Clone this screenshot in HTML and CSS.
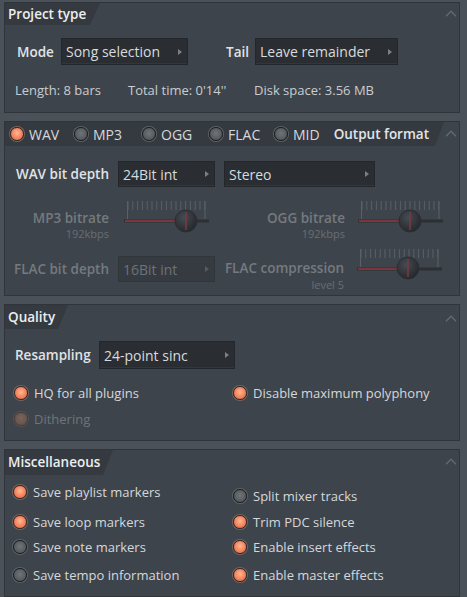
FILE: index.html
```html
<!DOCTYPE html>
<html>
<head>
<meta charset="utf-8">
<title>Render</title>
<link rel="stylesheet" href="styles.css">
</head>
<body>
<div class="win">

<section class="panel p1">
  <header class="phead">
    <div class="tab t-project">Project type</div>
    <svg class="chev c1" width="12" height="7" viewBox="0 0 12 7"><path d="M1 6.2 L6 1.2 L11 6.2"/></svg>
  </header>
  <div class="mode-row">
    <span class="lbl lbl-mode">Mode</span>
    <div class="dd dd-mode"><span>Song selection</span><i class="arr"></i></div>
    <span class="lbl lbl-tail">Tail</span>
    <div class="dd dd-tail"><span>Leave remainder</span><i class="arr"></i></div>
  </div>
  <div class="info-row">
    <span class="info i1">Length: 8 bars</span>
    <span class="info i2">Total time: 0'14''</span>
    <span class="info">Disk space: 3.56 MB</span>
  </div>
</section>

<section class="panel p2">
  <header class="phead">
    <div class="band">
      <label class="ritem f1"><i class="radio on"></i>WAV</label>
      <label class="ritem f2"><i class="radio"></i>MP3</label>
      <label class="ritem f3"><i class="radio"></i>OGG</label>
      <label class="ritem f4"><i class="radio"></i>FLAC</label>
      <label class="ritem"><i class="radio"></i>MID</label>
      <span class="band-title">Output format</span>
    </div>
    <svg class="chev c2" width="12" height="7" viewBox="0 0 12 7"><path d="M1 6.2 L6 1.2 L11 6.2"/></svg>
  </header>
  <div class="wav-row">
    <span class="lbl col-lbl">WAV bit depth</span>
    <div class="dd dd-depth"><span>24Bit int</span><i class="arr"></i></div>
    <div class="dd dd-stereo"><span>Stereo</span><i class="arr"></i></div>
  </div>
  <div class="srow1">
    <div class="slbl s-left">
      <span class="dim-lbl">MP3 bitrate</span>
      <span class="sub">192kbps</span>
    </div>
    <svg class="slider sl-mp3" width="88" height="40" viewBox="0 0 88 40">
      <defs>
        <radialGradient id="kg" cx="40%" cy="35%" r="70%">
          <stop offset="0" stop-color="#464b52"/>
          <stop offset="1" stop-color="#23262a"/>
        </radialGradient>
      </defs>
      <path class="ticks" d="M6 1V10M10.8 1V10M15.6 1V10M20.4 1V10M25.2 1V10M30 1V10M34.8 1V10M39.6 1V10M44.4 1V10M49.2 1V10M54 1V10M58.8 1V10M63.6 1V10M68.4 1V10M73.2 1V10M78 1V10M82.8 1V10"/>
      <path class="ends" d="M5.5 1V19M83 1V19"/>
      <line class="track" x1="2" y1="21" x2="87" y2="21"/>
      <line class="fill" x1="3" y1="21" x2="56" y2="21"/>
      <circle class="knob" cx="64" cy="21" r="11" fill="url(#kg)"/>
      <line class="kline" x1="64" y1="12" x2="64" y2="30"/>
    </svg>
    <div class="slbl s-right">
      <span class="dim-lbl">OGG bitrate</span>
      <span class="sub">192kbps</span>
    </div>
    <svg class="slider sl-ogg" width="88" height="40" viewBox="0 0 88 40">
      <path class="ticks" d="M6 1V10M10.8 1V10M15.6 1V10M20.4 1V10M25.2 1V10M30 1V10M34.8 1V10M39.6 1V10M44.4 1V10M49.2 1V10M54 1V10M58.8 1V10M63.6 1V10M68.4 1V10M73.2 1V10M78 1V10M82.8 1V10"/>
      <path class="ends" d="M5.5 1V19M83 1V19"/>
      <line class="track" x1="2" y1="21" x2="87" y2="21"/>
      <line class="fill" x1="3" y1="21" x2="46" y2="21"/>
      <circle class="knob" cx="54" cy="21" r="11" fill="url(#kg)"/>
      <line class="kline" x1="54" y1="12" x2="54" y2="30"/>
    </svg>
  </div>
  <div class="srow2">
    <span class="dim-lbl col-lbl flac-lbl">FLAC bit depth</span>
    <div class="dd dd-depth dd-off"><span>16Bit int</span><i class="arr"></i></div>
    <div class="slbl s-comp">
      <span class="dim-lbl">FLAC compression</span>
      <span class="sub">level 5</span>
    </div>
    <svg class="slider sl-flac" width="88" height="40" viewBox="0 0 88 40">
      <path class="ticks" d="M6 1V10M10.8 1V10M15.6 1V10M20.4 1V10M25.2 1V10M30 1V10M34.8 1V10M39.6 1V10M44.4 1V10M49.2 1V10M54 1V10M58.8 1V10M63.6 1V10M68.4 1V10M73.2 1V10M78 1V10M82.8 1V10"/>
      <path class="ends" d="M5.5 1V19M83 1V19"/>
      <line class="track" x1="2" y1="21" x2="87" y2="21"/>
      <line class="fill" x1="3" y1="21" x2="45" y2="21"/>
      <circle class="knob" cx="53" cy="20" r="11" fill="url(#kg)"/>
      <line class="kline" x1="53" y1="11" x2="53" y2="29"/>
    </svg>
  </div>
</section>

<section class="panel p3">
  <header class="phead">
    <div class="tab t-quality">Quality</div>
    <svg class="chev c3" width="12" height="7" viewBox="0 0 12 7"><path d="M1 6.2 L6 1.2 L11 6.2"/></svg>
  </header>
  <div class="res-row">
    <span class="lbl lbl-res">Resampling</span>
    <div class="dd dd-res"><span>24-point sinc</span><i class="arr"></i></div>
  </div>
  <div class="q-row q1">
    <label class="ritem qcol"><i class="radio on"></i>HQ for all plugins</label>
    <label class="ritem"><i class="radio on"></i>Disable maximum polyphony</label>
  </div>
  <div class="q-row q2">
    <label class="ritem off-item"><i class="radio dis"></i>Dithering</label>
  </div>
</section>

<section class="panel p4">
  <header class="phead">
    <div class="tab t-misc">Miscellaneous</div>
    <svg class="chev c4" width="12" height="7" viewBox="0 0 12 7"><path d="M1 6.2 L6 1.2 L11 6.2"/></svg>
  </header>
  <div class="misc-grid">
    <label class="ritem"><i class="radio on"></i>Save playlist markers</label>
    <label class="ritem lower"><i class="radio"></i>Split mixer tracks</label>
    <label class="ritem"><i class="radio on"></i>Save loop markers</label>
    <label class="ritem"><i class="radio on"></i>Trim PDC silence</label>
    <label class="ritem"><i class="radio"></i>Save note markers</label>
    <label class="ritem"><i class="radio on"></i>Enable insert effects</label>
    <label class="ritem"><i class="radio"></i>Save tempo information</label>
    <label class="ritem"><i class="radio on"></i>Enable master effects</label>
  </div>
</section>

</div>
</body>
</html>
```

FILE: styles.css
```css
html, body {
  margin: 0;
  padding: 0;
}
body {
  width: 467px;
  height: 597px;
  overflow: hidden;
  background: #4b5158;
  font-family: "Open Sans", "Noto Sans", "DejaVu Sans", sans-serif;
  font-size: 13px;
  color: #d5d8db;
}
.win {
  padding: 2px 7px 0 4px;
}
.panel {
  box-sizing: border-box;
  background: #3e444b;
  border: 1px solid #30353b;
  margin-bottom: 8px;
  display: flex;
  flex-direction: column;
}
.p1 { height: 111px; }
.p2 { height: 175px; }
.p3 { height: 137px; }
.p4 { height: 148px; margin-bottom: 0; }

.phead {
  display: flex;
  align-items: flex-start;
  flex: none;
}
.tab {
  box-sizing: border-box;
  height: 22px;
  line-height: 22px;
  padding-left: 3px;
  background: #353a41;
  clip-path: polygon(0 0, 100% 0, calc(100% - 10px) 100%, 0 100%);
  font-weight: 600;
  font-size: 13.5px;
  color: #eceef0;
}
.t-project { width: 95px; }
.t-quality { width: 63px; height: 24px; line-height: 24px; }
.t-misc { width: 108px; height: 25px; line-height: 25px; }

.chev {
  margin-left: auto;
  margin-right: 2px;
  flex: none;
}
.chev path {
  fill: none;
  stroke: #646a71;
  stroke-width: 1.4;
}
.c1 { margin-top: 7px; }
.c2 { margin-top: 8px; }
.c3 { margin-top: 10px; }
.c4 { margin-top: 8px; }

.lbl {
  font-weight: 600;
  font-size: 13.5px;
  color: #e0e3e6;
}

/* dropdowns */
.dd {
  box-sizing: border-box;
  display: flex;
  align-items: center;
  justify-content: space-between;
  height: 27px;
  padding: 0 5px 0 4px;
  background: #2a2e33;
  border: 1px solid #23272b;
  box-shadow: inset 0 -1px 0 #32373c;
  color: #d8dbde;
  font-size: 14px;
  flex: none;
}
.arr {
  width: 0;
  height: 0;
  border-left: 4px solid #7b8086;
  border-top: 3.5px solid transparent;
  border-bottom: 3.5px solid transparent;
}
.dd-off {
  background: #363b41;
  border-color: #31363b;
  box-shadow: none;
  color: #6c7278;
}
.dd-off .arr { border-left-color: #555b61; }

/* project type */
.mode-row {
  display: flex;
  align-items: center;
  margin-top: 13px;
  height: 27px;
  padding-left: 12px;
}
.lbl-mode { width: 44px; }
.dd-mode { width: 127px; }
.lbl-tail { width: 29px; margin-left: 38px; }
.dd-tail { width: 143px; }

.info-row {
  display: flex;
  align-items: center;
  margin-top: 16px;
  height: 18px;
  padding-left: 10px;
  color: #c9cdd1;
}
.i1 { width: 113px; }
.i2 { width: 126px; }

/* output format */
.band {
  box-sizing: border-box;
  width: 439px;
  height: 24px;
  display: flex;
  align-items: center;
  padding-left: 4px;
  background: #353a41;
  clip-path: polygon(0 0, 100% 0, calc(100% - 9px) 100%, 0 100%);
  font-size: 14px;
}
.band .ritem { gap: 5px; }
.band-title {
  margin-left: auto;
  padding-right: 15px;
  font-weight: 600;
  font-size: 13.5px;
  color: #e3e5e7;
}
.f1 { width: 64px; }
.f2 { width: 68px; }
.f3 { width: 67px; }
.f4 { width: 65px; }

.ritem {
  display: flex;
  align-items: center;
  gap: 6px;
  height: 18px;
  white-space: nowrap;
}
.radio {
  box-sizing: border-box;
  width: 14px;
  height: 14px;
  border-radius: 50%;
  flex: none;
  margin-left: 1px;
  background: radial-gradient(circle at 50% 45%, #6f7478 0, #5a5f63 55%, #4a4f53 100%);
  border: 1.5px solid #1b1e21;
  box-shadow: 0 0 0 1px #5d6267;
}
.radio.on {
  background: radial-gradient(circle at 50% 42%, #ffb896 0, #f8906a 40%, #dc6440 100%);
  border-color: #3b2924;
  box-shadow: 0 0 0 1px #76645d;
}
.radio.dis {
  background: radial-gradient(circle at 50% 42%, #7a645b 0, #6a5750 60%, #5c4c46 100%);
  border-color: #4a403c;
  box-shadow: 0 0 0 1px #55504e;
}
.off-item { color: #6e747a; }

.wav-row {
  display: flex;
  align-items: center;
  margin-top: 15px;
  height: 26px;
}
.col-lbl {
  width: 104px;
  text-align: right;
  flex: none;
}
.wav-row .dd { height: 26px; }
.dd-depth { width: 97px; margin-left: 9px; }
.dd-stereo { width: 151px; margin-left: 9px; }

.dim-lbl {
  font-weight: 600;
  font-size: 13.5px;
  color: #747a80;
}
.sub {
  font-size: 11px;
  line-height: 14px;
  color: #686e74;
}
.slbl {
  display: flex;
  flex-direction: column;
  align-items: flex-end;
  flex: none;
}
.slbl .dim-lbl { line-height: 18px; }

.srow1 {
  display: flex;
  margin-top: 13px;
  height: 40px;
}
.s-left { width: 104px; padding-top: 9px; box-sizing: border-box; }
.s-right { width: 135px; padding-top: 9px; box-sizing: border-box; }
.sl-mp3 { margin-left: 13px; }
.sl-ogg { margin-left: 11px; }

.srow2 {
  display: flex;
  align-items: flex-start;
  margin-top: 8px;
  height: 42px;
}
.flac-lbl { line-height: 26px; margin-top: 8px; }
.srow2 .dd { height: 26px; margin-top: 8px; }
.s-comp { width: 129px; padding-top: 11px; box-sizing: border-box; }
.s-comp .sub { margin-top: 1px; }
.sl-flac { margin-left: 11px; }

.slider { flex: none; }
.ticks { stroke: #596067; stroke-width: 1; fill: none; }
.ends { stroke: #596067; stroke-width: 1; fill: none; }
.track { stroke: #2c3035; stroke-width: 3; }
.fill { stroke: #7a363c; stroke-width: 2; }
.knob { stroke: #2b2e32; stroke-width: 1; }
.kline { stroke: #763a40; stroke-width: 1.6; }

/* quality */
.res-row {
  display: flex;
  align-items: center;
  margin-top: 12px;
  height: 28px;
  padding-left: 10px;
}
.lbl-res { width: 84px; }
.dd-res { width: 136px; height: 28px; }
.q-row {
  display: flex;
  align-items: center;
  height: 18px;
  padding-left: 8px;
}
.q1 { margin-top: 15px; }
.q2 { margin-top: 8px; }
.qcol { width: 219px; }

/* misc */
.misc-grid {
  display: grid;
  grid-template-columns: 220px auto;
  grid-template-rows: 30px 25px 28px 18px;
  margin-top: 8px;
  padding-left: 7px;
  align-items: start;
}
.lower { margin-top: 4px; }
```
